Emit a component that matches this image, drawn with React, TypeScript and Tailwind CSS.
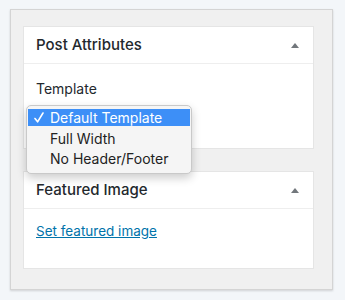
export default function App() {
  return (
    <div className="w-[345px] h-[300px] bg-[#f3f6f9] pt-[9px] pl-[10px] font-['Inter',sans-serif] text-[#23282d]">
      <div className="w-[323px] h-[281px] bg-[#f0f0f0] border border-[#d4d4d4] shadow-[0_1px_2px_rgba(0,0,0,0.15)] pt-[16px] pl-[12px]">
        {/* Post Attributes */}
        <div className="relative w-[291px] bg-white border border-[#e5e5e5]">
          <div className="h-[37px] flex items-center justify-between pl-[12px] pr-[14px] border-b border-[#eeeeee]">
            <h2 className="text-[15px] font-medium">Post Attributes</h2>
            <svg width="8" height="5" viewBox="0 0 8 5">
              <path d="M4 0 L8 5 L0 5 Z" fill="#72777c" />
            </svg>
          </div>
          <div className="h-[84px] pl-[12px] pt-[14px]">
            <p className="text-[14px]">Template</p>
          </div>

          {/* open select menu */}
          <div className="absolute left-[2px] top-[78px] w-[166px] bg-[#f5f5f5] border border-[#c9c9c9] rounded-[5px] shadow-[0_4px_10px_rgba(0,0,0,0.2)] pt-[3px] pb-[5px] px-[1px] text-[14px] z-10">
            <div className="h-[17px] mb-[2px] bg-[#3d8ff7] text-white flex items-center pl-[6px]">
              <svg width="10" height="11" viewBox="0 0 10 11" className="mr-[6px]">
                <path d="M1 6.5 L3.6 9.8 L9 1" fill="none" stroke="white" strokeWidth="1.6" strokeLinecap="round" strokeLinejoin="round" />
              </svg>
              <span>Default Template</span>
            </div>
            <div className="h-[20px] flex items-center pl-[22px] text-[#222]">Full Width</div>
            <div className="h-[20px] flex items-center pl-[22px] text-[#222]">No Header/Footer</div>
          </div>
        </div>

        {/* Featured Image */}
        <div className="mt-[22px] w-[291px] bg-white border border-[#e5e5e5]">
          <div className="h-[37px] flex items-center justify-between pl-[12px] pr-[14px] border-b border-[#eeeeee]">
            <h2 className="text-[15px] font-medium">Featured Image</h2>
            <svg width="8" height="5" viewBox="0 0 8 5">
              <path d="M4 0 L8 5 L0 5 Z" fill="#72777c" />
            </svg>
          </div>
          <div className="h-[59px] pl-[12px] pt-[9px]">
            <a href="#" className="text-[13.5px] text-[#0073aa] underline">Set featured image</a>
          </div>
        </div>
      </div>
    </div>
  );
}
